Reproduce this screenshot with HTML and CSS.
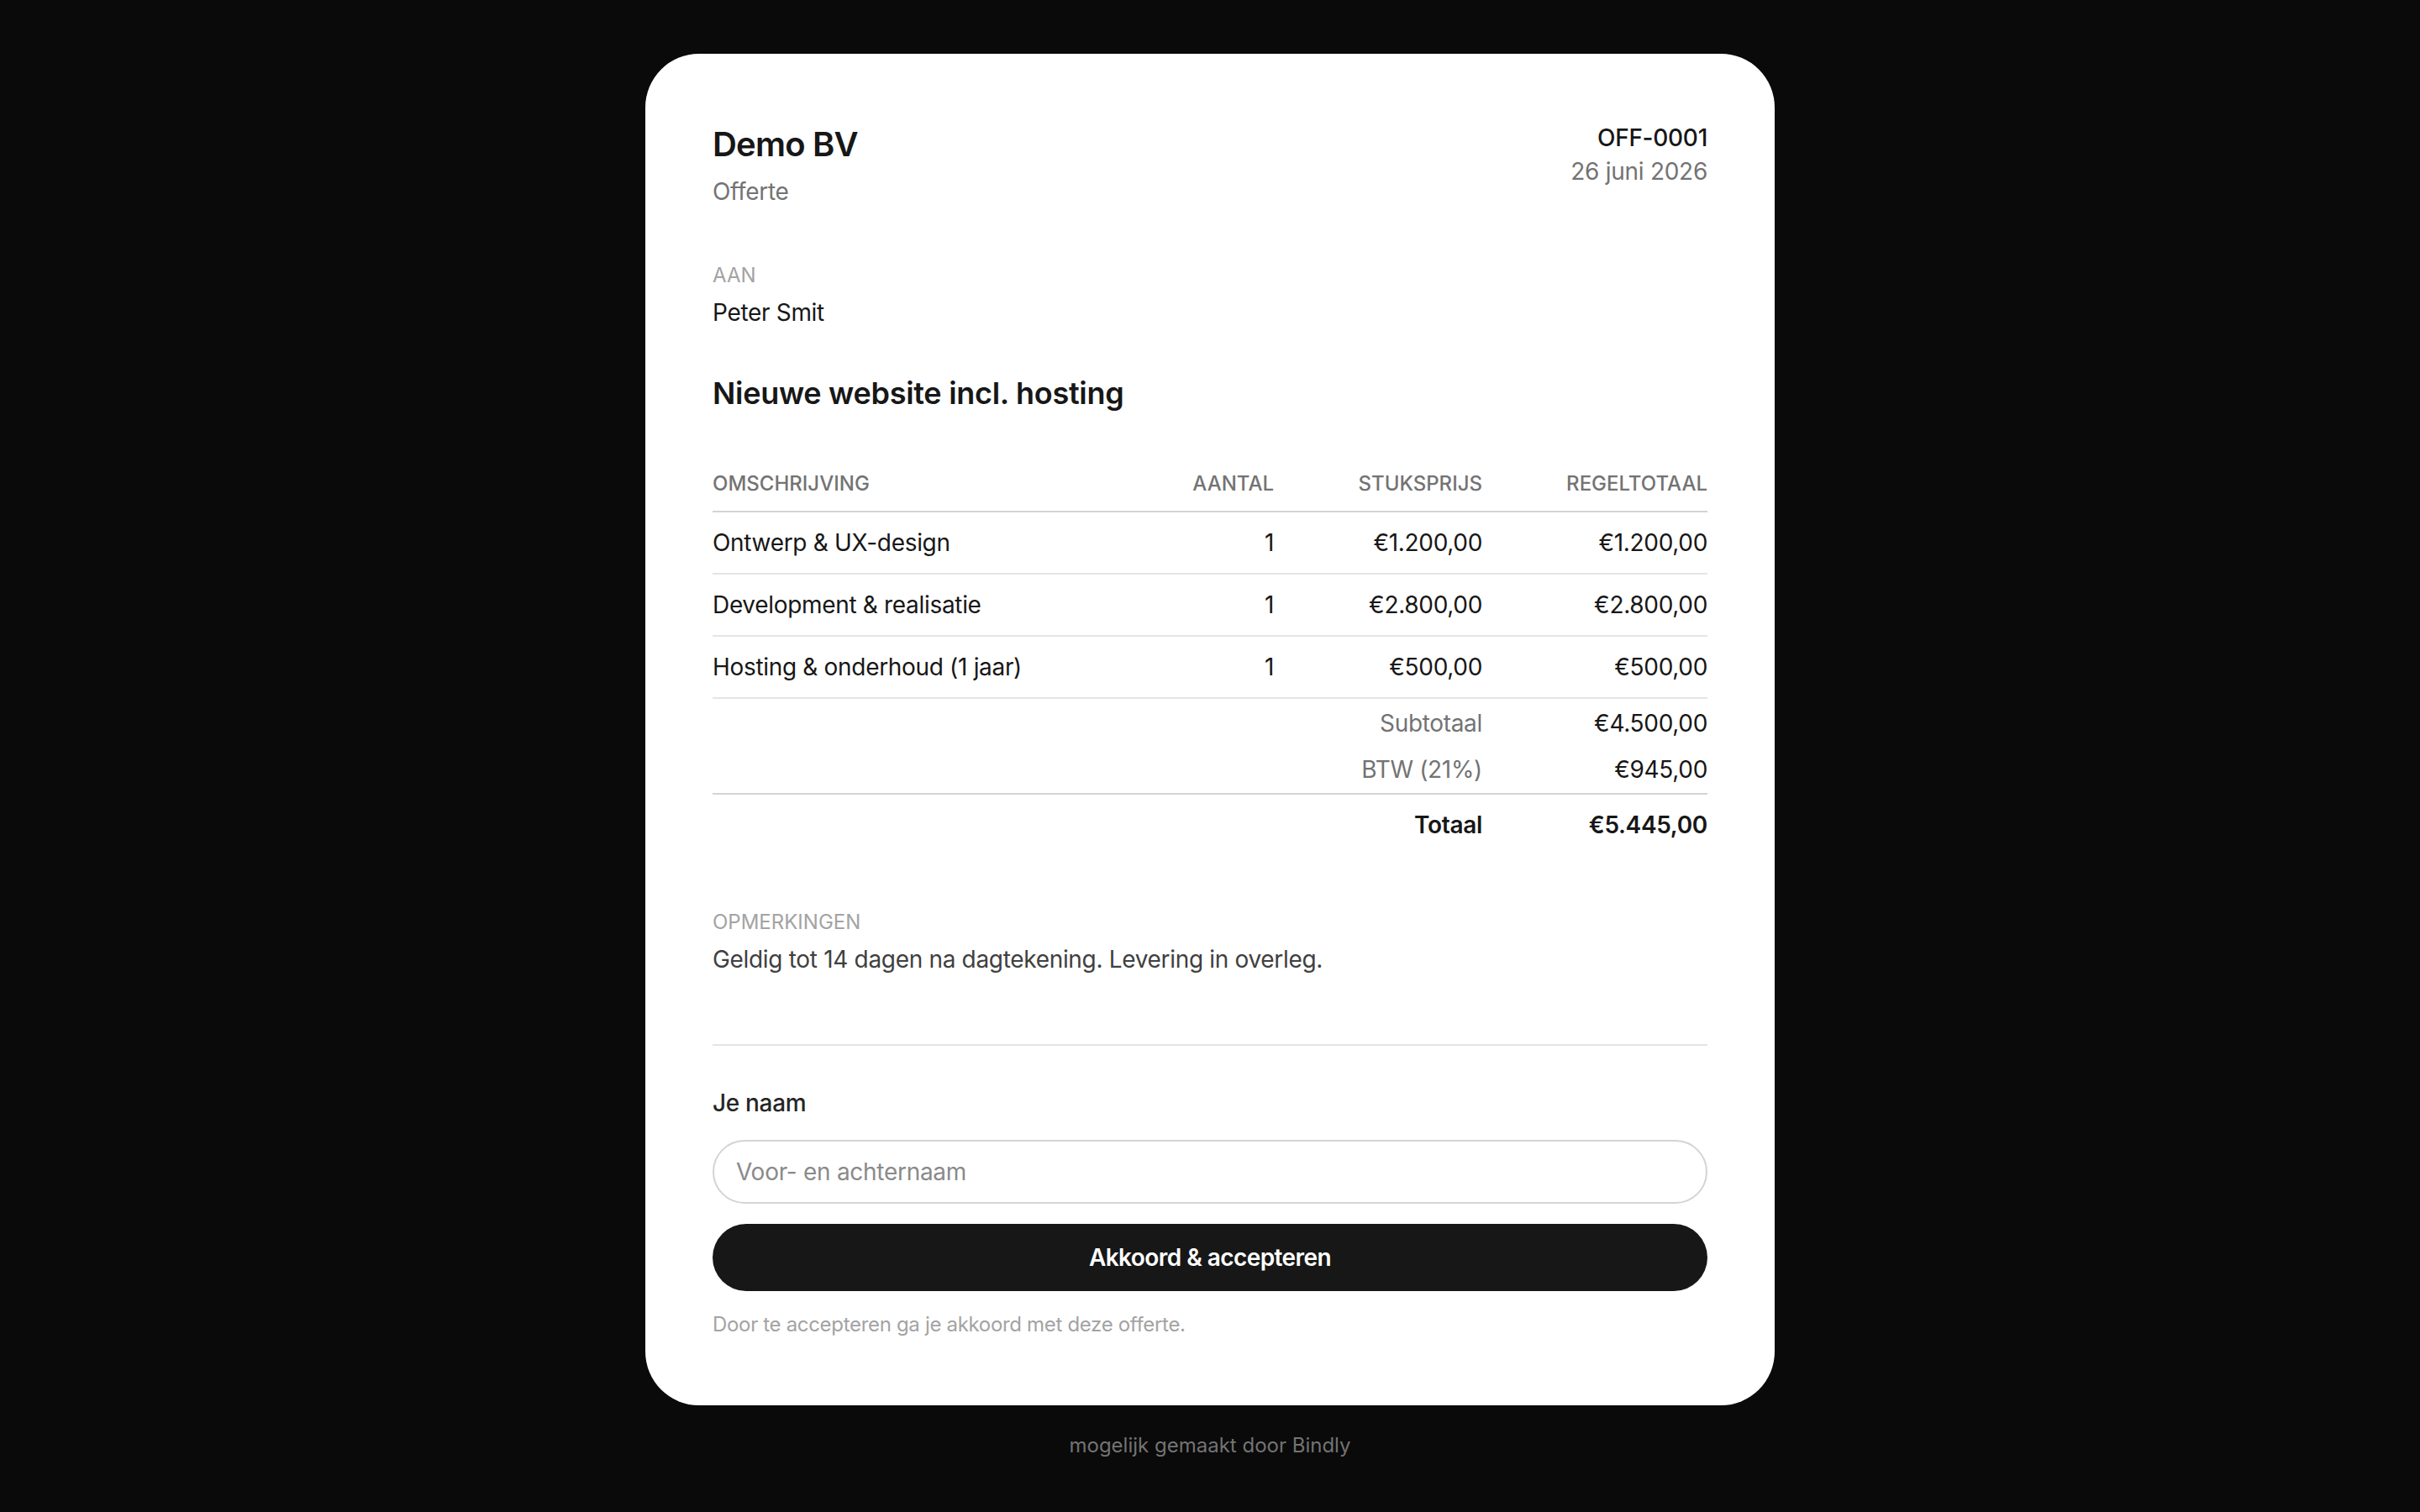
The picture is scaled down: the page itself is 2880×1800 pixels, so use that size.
FILE: index.html
```html
<!DOCTYPE html>
<html lang="nl">
<head>
    <meta charset="UTF-8">
    <meta name="viewport" content="width=device-width, initial-scale=1.0">
    <title>Offerte OFF-0001</title>
    <link rel="stylesheet" href="styles.css">
</head>
<body>
    <main class="page">
        <div class="card">
            <!-- Header -->
            <div class="top">
                <div>
                    <h1 class="company">Demo BV</h1>
                    <div class="doc-type">Offerte</div>
                </div>
                <div class="meta">
                    <div class="number">OFF-0001</div>
                    <div class="date">26 juni 2026</div>
                </div>
            </div>

            <!-- Recipient -->
            <div class="recipient">
                <div class="label">Aan</div>
                <div class="name">Peter Smit</div>
            </div>

            <h2 class="title">Nieuwe website incl. hosting</h2>

            <!-- Lines -->
            <table class="lines">
                <colgroup>
                    <col>
                    <col class="col-qty">
                    <col class="col-price">
                    <col class="col-total">
                </colgroup>
                <thead>
                    <tr>
                        <th>Omschrijving</th>
                        <th class="num">Aantal</th>
                        <th class="num">Stuksprijs</th>
                        <th class="num">Regeltotaal</th>
                    </tr>
                </thead>
                <tbody>
                    <tr class="item">
                        <td>Ontwerp &amp; UX-design</td>
                        <td class="num">1</td>
                        <td class="num">€1.200,00</td>
                        <td class="num">€1.200,00</td>
                    </tr>
                    <tr class="item">
                        <td>Development &amp; realisatie</td>
                        <td class="num">1</td>
                        <td class="num">€2.800,00</td>
                        <td class="num">€2.800,00</td>
                    </tr>
                    <tr class="item">
                        <td>Hosting &amp; onderhoud (1 jaar)</td>
                        <td class="num">1</td>
                        <td class="num">€500,00</td>
                        <td class="num">€500,00</td>
                    </tr>
                </tbody>
                <tfoot>
                    <tr class="sub first">
                        <td colspan="3" class="num muted">Subtotaal</td>
                        <td class="num">€4.500,00</td>
                    </tr>
                    <tr class="sub last">
                        <td colspan="3" class="num muted">BTW (21%)</td>
                        <td class="num">€945,00</td>
                    </tr>
                    <tr class="grand">
                        <td colspan="3" class="num">Totaal</td>
                        <td class="num">€5.445,00</td>
                    </tr>
                </tfoot>
            </table>

            <!-- Notes -->
            <div class="notes">
                <div class="label">Opmerkingen</div>
                <p>Geldig tot 14 dagen na dagtekening. Levering in overleg.</p>
            </div>

            <!-- Accept form -->
            <form class="accept" onsubmit="return false">
                <label for="signName">Je naam</label>
                <input type="text" id="signName" placeholder="Voor- en achternaam">
                <button type="submit">Akkoord &amp; accepteren</button>
                <p class="hint">Door te accepteren ga je akkoord met deze offerte.</p>
            </form>
        </div>

        <footer class="powered">mogelijk gemaakt door Bindly</footer>
    </main>
</body>
</html>
```

FILE: styles.css
```css
* {
    box-sizing: border-box;
}
body {
    margin: 0;
    background-color: #0a0a0a;
    font-family: Inter, "Liberation Sans", Arial, sans-serif;
    color: #171717;
    letter-spacing: -0.02em;
}
.page {
    display: flex;
    flex-direction: column;
    align-items: center;
    padding: 64px 0;
}
.card {
    width: 1344px;
    background-color: #ffffff;
    border-radius: 64px;
    padding: 80px;
}

/* Header */
.top {
    display: flex;
    justify-content: space-between;
    align-items: flex-start;
}
.company {
    margin: 0;
    font-size: 40px;
    line-height: 56px;
    font-weight: 600;
    letter-spacing: -0.02em;
}
.doc-type {
    margin-top: 8px;
    font-size: 28px;
    line-height: 40px;
    color: #737373;
}
.meta {
    text-align: right;
    font-size: 28px;
    line-height: 40px;
    letter-spacing: -0.01em;
}
.meta .number {
    font-weight: 500;
}
.meta .date {
    color: #737373;
}

.label {
    font-size: 24px;
    line-height: 32px;
    text-transform: uppercase;
    color: #a3a3a3;
    letter-spacing: 0;
}
.recipient {
    margin-top: 64px;
}
.recipient .name {
    margin-top: 8px;
    font-size: 28px;
    line-height: 40px;
}
.title {
    margin: 48px 0 0;
    font-size: 36px;
    line-height: 56px;
    font-weight: 600;
    letter-spacing: -0.008em;
}

/* Lines table */
.lines {
    width: 100%;
    margin-top: 48px;
    border-collapse: collapse;
    table-layout: fixed;
    font-size: 28px;
    line-height: 40px;
}
.col-qty {
    width: 167px;
}
.col-price {
    width: 248px;
}
.col-total {
    width: 268px;
}
.lines th {
    padding: 16px 0;
    font-size: 24px;
    line-height: 32px;
    font-weight: 500;
    text-transform: uppercase;
    text-align: left;
    color: #737373;
    letter-spacing: 0;
    border-bottom: 2px solid #d4d4d4;
}
.lines td {
    padding: 0;
}
.lines .num {
    text-align: right;
}
.lines .item td {
    padding: 16px 0;
    border-bottom: 2px solid #e5e5e5;
}
.lines .sub td {
    padding: 8px 0;
}
.lines .sub.first td {
    padding-top: 9px;
    padding-bottom: 7px;
}
.lines .sub.last td {
    border-bottom: 2px solid #d4d4d4;
}
.lines .muted {
    color: #737373;
}
.lines .grand td {
    padding: 16px 0;
    font-weight: 600;
}

/* Notes */
.notes {
    margin-top: 64px;
}
.notes p {
    margin: 8px 0 0;
    font-size: 28px;
    line-height: 40px;
    color: #404040;
}

/* Accept form */
.accept {
    display: flex;
    flex-direction: column;
    margin: 81px 0 0;
    padding-top: 48px;
    border-top: 2px solid #e5e5e5;
}
.accept label {
    font-size: 28px;
    line-height: 40px;
    font-weight: 500;
    color: #262626;
}
.accept input {
    margin-top: 24px;
    height: 76px;
    padding: 0 26px;
    border: 2px solid #d4d4d4;
    border-radius: 999px;
    font-family: inherit;
    font-size: 28px;
    letter-spacing: -0.01em;
    color: #171717;
    outline: none;
}
.accept input::placeholder {
    color: #8a8a8a;
}
.accept button {
    margin-top: 24px;
    height: 80px;
    border: none;
    border-radius: 999px;
    background-color: #171717;
    color: #ffffff;
    font-family: inherit;
    font-size: 28px;
    font-weight: 600;
    letter-spacing: -0.02em;
    cursor: pointer;
}
.accept .hint {
    margin: 24px 0 0;
    font-size: 24px;
    line-height: 32px;
    color: #a3a3a3;
}

.powered {
    margin-top: 32px;
    font-size: 24px;
    line-height: 32px;
    color: #737373;
    letter-spacing: 0;
}
```
